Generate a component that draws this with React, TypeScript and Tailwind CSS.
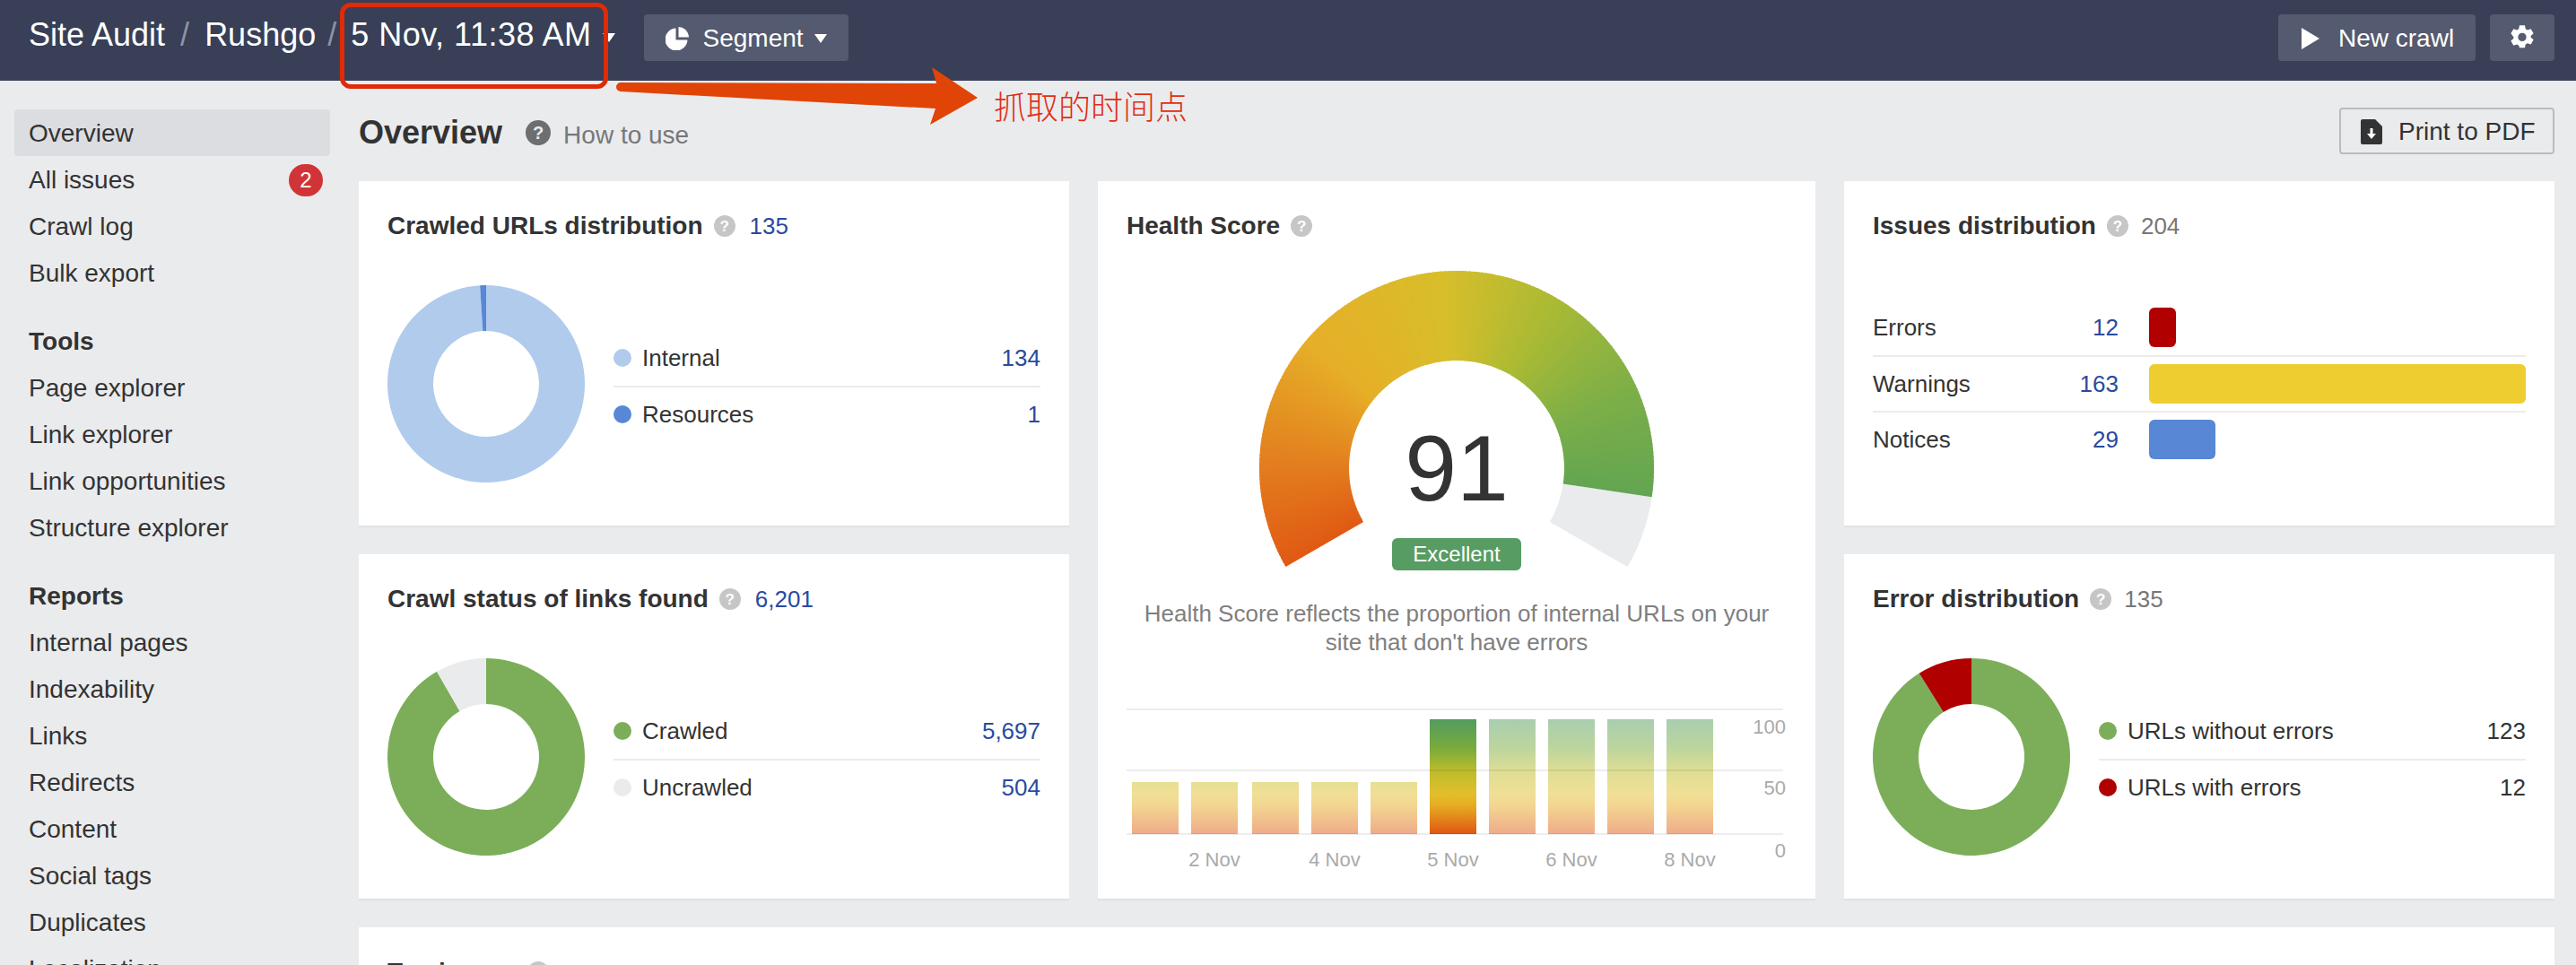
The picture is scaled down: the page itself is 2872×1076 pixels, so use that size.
import { FC, ReactNode } from "react"

const FONT = "font-['Liberation_Sans',Arial,sans-serif]"

const polar = (cx: number, cy: number, r: number, deg: number) => {
  const a = (deg * Math.PI) / 180
  return [cx + r * Math.sin(a), cy - r * Math.cos(a)]
}

// slice of a ring, angles clockwise from 12 o'clock
const ringPath = (cx: number, cy: number, ro: number, ri: number, from: number, to: number) => {
  const [x1, y1] = polar(cx, cy, ro, from)
  const [x2, y2] = polar(cx, cy, ro, to)
  const [x3, y3] = polar(cx, cy, ri, to)
  const [x4, y4] = polar(cx, cy, ri, from)
  const large = to - from > 180 ? 1 : 0
  return `M${x1} ${y1}A${ro} ${ro} 0 ${large} 1 ${x2} ${y2}L${x3} ${y3}A${ri} ${ri} 0 ${large} 0 ${x4} ${y4}Z`
}

const Donut: FC<{ slices: { from: number; to: number; color: string }[] }> = ({ slices }) => (
  <svg width="220" height="220" viewBox="0 0 220 220" className="shrink-0">
    {slices.map((s) => (
      <path key={s.from} d={ringPath(110, 110, 110, 59, s.from, s.to)} fill={s.color} />
    ))}
  </svg>
)

const Help: FC<{ dark?: boolean }> = ({ dark }) => (
  <span
    className={
      dark
        ? "flex h-[28px] w-[28px] shrink-0 items-center justify-center rounded-full bg-[#6e6e6e] text-[20px] font-bold leading-none text-[#eaebed]"
        : "flex h-[24px] w-[24px] shrink-0 items-center justify-center rounded-full bg-[#c6c6c6] text-[17px] font-bold leading-none text-white"
    }
  >
    ?
  </span>
)

const CardTitle: FC<{ title: string; count?: string; muted?: boolean }> = ({ title, count, muted }) => (
  <div className="flex h-[32px] items-center">
    <span className="text-[28px] font-bold leading-none text-[#333]">{title}</span>
    <span className="ml-[12px]">
      <Help />
    </span>
    {count && (
      <span className={`text-[26px] leading-none ${muted ? "ml-[14px] text-[#777]" : "ml-[16px] text-[#2a4a9e]"}`}>{count}</span>
    )}
  </div>
)

const Card: FC<{ className?: string; children: ReactNode }> = ({ className, children }) => (
  <div className={`bg-white px-[32px] pt-[34px] shadow-[0_2px_0_#e0e1e3] ${className ?? ""}`}>{children}</div>
)

const Legend: FC<{ rows: { label: string; value: string; color: string; dark?: boolean }[] }> = ({ rows }) => (
  <div className="ml-[32px] mt-[4px] flex grow flex-col">
    {rows.map((r, i) => (
      <div
        key={r.label}
        className={`flex h-[62px] items-center text-[26px] text-[#333] ${i > 0 ? "border-t-2 border-[#ebebeb]" : ""}`}
      >
        <span className="mr-[12px] h-[20px] w-[20px] rounded-full" style={{ background: r.color }} />
        <span className="grow">{r.label}</span>
        <span className={r.dark ? "text-[#333]" : "text-[#2a4a9e]"}>{r.value}</span>
      </div>
    ))}
  </div>
)

const DonutCard: FC<{
  title: string
  count: string
  muted?: boolean
  slices: { from: number; to: number; color: string }[]
  rows: { label: string; value: string; color: string; dark?: boolean }[]
}> = ({ title, count, muted, slices, rows }) => (
  <Card className="h-[384px]">
    <CardTitle title={title} count={count} muted={muted} />
    <div className="mt-[50px] flex items-center">
      <Donut slices={slices} />
      <Legend rows={rows} />
    </div>
  </Card>
)

const Section: FC<{ title?: string; items: string[]; active?: string; badge?: Record<string, string> }> = ({
  title,
  items,
  active,
  badge,
}) => (
  <div className="mb-[24px]">
    {title && <div className="flex h-[52px] items-center px-[16px] pt-[2px] text-[28px] font-bold text-[#333]">{title}</div>}
    {items.map((x) => (
      <div
        key={x}
        className={`flex h-[52px] items-center justify-between rounded-[4px] pl-[16px] pr-[8px] pt-[2px] text-[28px] text-[#333] ${
          x === active ? "bg-[#dcdde0]" : ""
        }`}
      >
        <span>{x}</span>
        {badge?.[x] && (
          <span className="flex h-[36px] w-[38px] items-center justify-center rounded-full bg-[#d13438] text-[24px] text-white">
            {badge[x]}
          </span>
        )}
      </div>
    ))}
  </div>
)

const lerp = (a: number[], b: number[], t: number) => a.map((v, i) => Math.round(v + (b[i] - v) * t))

// colour stops along the gauge sweep
const gaugeStops: [number, number[]][] = [
  [0, [224, 90, 20]],
  [30, [227, 125, 30]],
  [70, [230, 175, 40]],
  [115, [216, 190, 42]],
  [150, [170, 186, 52]],
  [185, [125, 175, 72]],
  [218.4, [98, 165, 82]],
]

const gaugeColor = (d: number) => {
  for (let i = 1; i < gaugeStops.length; ++i) {
    if (d <= gaugeStops[i][0]) {
      const [d0, c0] = gaugeStops[i - 1]
      const [d1, c1] = gaugeStops[i]
      return `rgb(${lerp(c0, c1, (d - d0) / (d1 - d0)).join(",")})`
    }
  }
  return "rgb(98,165,82)"
}

const Gauge = () => {
  const parts = []
  for (let d = 0; d < 218.4; d += 1.2) {
    const end = Math.min(d + 1.7, 218.4)
    parts.push(<path key={d} d={ringPath(220, 220, 220, 120, 240 + d, 240 + end)} fill={gaugeColor(d)} />)
  }
  return (
    <svg width="440" height="340" viewBox="0 0 440 340" className="block">
      <path d={ringPath(220, 220, 220, 120, 98.4, 120)} fill="#eaebed" />
      {parts}
    </svg>
  )
}

const bars = [0, 1, 2, 3, 4, 5, 6, 7, 8, 9]

const HealthChart = () => (
  <svg width="736" height="190" viewBox="0 0 736 190" className={`block ${FONT}`}>
    <defs>
      <linearGradient id="hs" gradientUnits="userSpaceOnUse" x1="0" y1="12" x2="0" y2="140">
        <stop offset="0" stopColor="#529c60" />
        <stop offset="0.25" stopColor="#79ab3c" />
        <stop offset="0.45" stopColor="#bcbc2a" />
        <stop offset="0.65" stopColor="#e2bf2c" />
        <stop offset="0.75" stopColor="#e7ac22" />
        <stop offset="1" stopColor="#df5712" />
      </linearGradient>
    </defs>
    {bars.map((i) => {
      const short = i < 5
      const x = 6 + i * 66 + (i > 1 ? 2 : 0)
      return (
        <rect
          key={i}
          x={x}
          y={short ? 82 : 12}
          width="52"
          height={short ? 58 : 128}
          fill="url(#hs)"
          opacity={i === 5 ? 1 : 0.5}
        />
      )
    })}
    {[1, 69, 140].map((y) => (
      <rect key={y} x="0" y={y - 1} width="732" height="2" fill="#000" opacity="0.07" />
    ))}
    {[
      ["2 Nov", 98],
      ["4 Nov", 232],
      ["5 Nov", 364],
      ["6 Nov", 496],
      ["8 Nov", 628],
    ].map(([t, x]) => (
      <text key={t} x={x} y="176" fontSize="22" fill="#aaa" textAnchor="middle">
        {t}
      </text>
    ))}
    {[
      ["100", 28],
      ["50", 96],
      ["0", 166],
    ].map(([t, y]) => (
      <text key={t} x="735" y={y} fontSize="22" fill="#aaa" textAnchor="end">
        {t}
      </text>
    ))}
  </svg>
)

const Caret: FC<{ className?: string }> = ({ className }) => (
  <svg width="14" height="10" viewBox="0 0 14 10" className={className}>
    <path d="M0 0H14L7 10Z" fill="#fff" />
  </svg>
)

const HeaderBar = () => (
  <div className="flex h-[90px] shrink-0 items-start justify-between bg-[#383f57] pl-[32px] pr-[24px] pt-[16px] text-white">
    <div className="flex items-start">
      <div className="flex h-[46px] items-center whitespace-pre text-[36px] leading-none">
        <span>Site Audit</span>
        <span className="mx-[17px] text-[#8e93a3]">/</span>
        <span>Rushgo</span>
        <span className="ml-[13px] mr-[16px] text-[#8e93a3]">/</span>
        <span className="tracking-[0.5px]">5 Nov, 11:38 AM</span>
      </div>
      <Caret className="ml-[12px] mt-[21px]" />
      <div className="ml-[32px] flex h-[52px] items-center rounded-[4px] bg-[#545a6f] pl-[24px] pr-[24px] pt-[2px] text-[28px]">
        <svg width="26" height="26" viewBox="0 0 26 26" className="mr-[16px]">
          <path d="M11.5 1.5V14.5H24.5A12.5 12.5 0 1 1 11.5 1.5Z" fill="#fff" />
          <path d="M14.5 0A12 12 0 0 1 26 11.5H14.5Z" fill="#fff" />
        </svg>
        <span>Segment</span>
        <Caret className="ml-[12px]" />
      </div>
    </div>
    <div className="flex gap-[16px]">
      <div className="flex h-[52px] w-[220px] items-center rounded-[4px] bg-[#545a6f] pl-[26px] pt-[2px] text-[28px]">
        <svg width="20" height="24" viewBox="0 0 20 24" className="mr-[21px]">
          <path d="M0 0L20 12L0 24Z" fill="#fff" />
        </svg>
        New crawl
      </div>
      <div className="flex h-[52px] w-[72px] items-center justify-center rounded-[4px] bg-[#545a6f]">
        <svg width="30" height="30" viewBox="0 0 24 24">
          <path
            fill="#fff"
            fillRule="evenodd"
            d="M9.6 1h4.8l.6 3.1 1.7 1 3-1 2.4 4.1-2.4 2.1v1.4l2.4 2.1-2.4 4.1-3-1-1.7 1-.6 3.1H9.6L9 18.9l-1.7-1-3 1-2.4-4.1 2.4-2.1v-1.4L1.9 8.2l2.4-4.1 3 1 1.7-1zM12 7.8a3.7 3.7 0 1 0 0 7.4 3.7 3.7 0 0 0 0-7.4z"
          />
        </svg>
      </div>
    </div>
  </div>
)

const issues = [
  { label: "Errors", value: "12", w: "w-[30px]", color: "bg-[#b00000]" },
  { label: "Warnings", value: "163", w: "w-[420px]", color: "bg-[#eecd31]" },
  { label: "Notices", value: "29", w: "w-[74px]", color: "bg-[#5787d5]" },
]

export default function App() {
  return (
    <div className={`relative flex h-[1076px] flex-col overflow-hidden bg-[#eaebed] ${FONT}`}>
      <HeaderBar />

      <div className="flex grow">
        <div className="w-[400px] shrink-0 pl-[16px] pr-[32px] pt-[32px]">
          <Section items={["Overview", "All issues", "Crawl log", "Bulk export"]} active="Overview" badge={{ "All issues": "2" }} />
          <Section title="Tools" items={["Page explorer", "Link explorer", "Link opportunities", "Structure explorer"]} />
          <Section
            title="Reports"
            items={["Internal pages", "Indexability", "Links", "Redirects", "Content", "Social tags", "Duplicates", "Localization"]}
          />
        </div>

        <div className="grow pr-[24px]">
          <div className="flex h-[112px] items-start justify-between pt-[30px]">
            <div className="flex h-[56px] items-center">
              <span className="text-[36px] font-bold leading-none text-[#333]">Overview</span>
              <span className="ml-[26px]">
                <Help dark />
              </span>
              <span className="ml-[14px] pt-[6px] text-[28px] leading-none text-[#777]">How to use</span>
            </div>
            <div className="flex h-[52px] w-[240px] items-center rounded-[4px] border-2 border-[#bbb] pl-[22px] pt-[1px] text-[28px] text-[#333]">
              <svg width="24" height="28" viewBox="0 0 24 28" className="mr-[18px]">
                <path d="M2 0H16L24 8V26A2 2 0 0 1 22 28H2A2 2 0 0 1 0 26V2A2 2 0 0 1 2 0Z" fill="#333" />
                <path d="M10.5 10H13.5V16H17L12 22L7 16H10.5Z" fill="#fff" />
              </svg>
              Print to PDF
            </div>
          </div>

          <div className="grid grid-cols-[792px_800px_792px] gap-x-[32px] gap-y-[32px]">
            <DonutCard
              title="Crawled URLs distribution"
              count="135"
              slices={[
                { from: 0, to: 356.4, color: "#b0cbec" },
                { from: 356.4, to: 360, color: "#5787d5" },
              ]}
              rows={[
                { label: "Internal", value: "134", color: "#b0cbec" },
                { label: "Resources", value: "1", color: "#5787d5" },
              ]}
            />

            <Card className="row-span-2">
              <CardTitle title="Health Score" />
              <div className="relative mt-[34px] flex justify-center">
                <Gauge />
                <div className="absolute left-0 right-0 top-[164px] text-center text-[104px] leading-[112px] text-[#333]">91</div>
                <div className="absolute left-[296px] top-[298px] flex h-[36px] w-[144px] items-center justify-center rounded-[6px] bg-[#579c63] text-[24px] text-white">
                  Excellent
                </div>
              </div>
              <div className="mt-[26px] text-center text-[26px] leading-[32px] text-[#7f7f7f]">
                Health Score reflects the proportion of internal URLs on your
                <br />
                site that don't have errors
              </div>
              <div className="mt-[58px]">
                <HealthChart />
              </div>
            </Card>

            <Card className="h-[384px]">
              <CardTitle title="Issues distribution" count="204" muted />
              <div className="mt-[66px] flex flex-col">
                {issues.map((r, i) => (
                  <div key={r.label} className={`flex h-[62px] items-center text-[26px] ${i > 0 ? "border-t-2 border-[#ebebeb]" : ""}`}>
                    <span className="w-[200px] text-[#333]">{r.label}</span>
                    <span className="w-[74px] text-right text-[#2a4a9e]">{r.value}</span>
                    <span className={`ml-[34px] h-[44px] rounded-[6px] ${r.w} ${r.color}`} />
                  </div>
                ))}
              </div>
            </Card>

            <DonutCard
              title="Crawl status of links found"
              count="6,201"
              slices={[
                { from: 0, to: 330, color: "#7cae5a" },
                { from: 330, to: 360, color: "#eaebed" },
              ]}
              rows={[
                { label: "Crawled", value: "5,697", color: "#7cae5a" },
                { label: "Uncrawled", value: "504", color: "#eaebed" },
              ]}
            />

            <DonutCard
              title="Error distribution"
              count="135"
              muted
              slices={[
                { from: 0, to: 328, color: "#7cae5a" },
                { from: 328, to: 360, color: "#b00000" },
              ]}
              rows={[
                { label: "URLs without errors", value: "123", color: "#7cae5a", dark: true },
                { label: "URLs with errors", value: "12", color: "#b00000", dark: true },
              ]}
            />

            <Card className="col-span-3 h-[200px]">
              <CardTitle title="Top issues" />
            </Card>
          </div>
        </div>
      </div>

      {/* annotation drawn over the screenshot */}
      <div className="absolute left-[379px] top-[3px] h-[96px] w-[299px] rounded-[12px] border-[5px] border-[#df2b07]" />
      <svg width="420" height="80" viewBox="0 0 420 80" className="absolute left-[680px] top-[70px]">
        <path d="M12 22L364 23L359 5L410 39L357 69L363 51L12 32A5 5 0 0 1 12 22Z" fill="#e14407" />
      </svg>
      <div className="absolute left-[1108px] top-[92px] font-['Noto_Sans_CJK_SC',sans-serif] text-[36px] font-light leading-[50px] text-[#df2e14]">
        抓取的时间点
      </div>
    </div>
  )
}
